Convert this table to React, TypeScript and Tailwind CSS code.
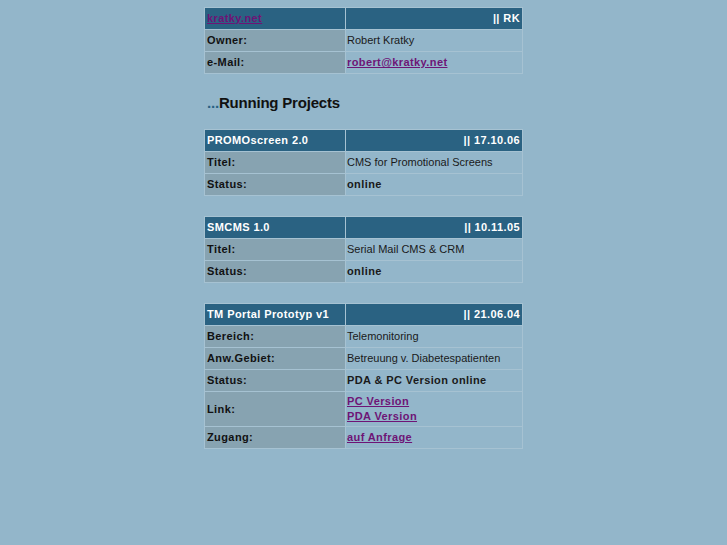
import React from 'react'

type Row = { label: string; value: React.ReactNode; tall?: boolean }

const linkCls = 'font-bold tracking-[0.4px] underline text-[#6e1476]'

const projects: { title: string; date: string; rows: Row[] }[] = [
    {
        title: 'PROMOscreen 2.0',
        date: '17.10.06',
        rows: [
            { label: 'Titel:', value: 'CMS for Promotional Screens' },
            { label: 'Status:', value: <b className="tracking-[0.4px]">online</b> },
        ],
    },
    {
        title: 'SMCMS 1.0',
        date: '10.11.05',
        rows: [
            { label: 'Titel:', value: 'Serial Mail CMS & CRM' },
            { label: 'Status:', value: <b className="tracking-[0.4px]">online</b> },
        ],
    },
    {
        title: 'TM Portal Prototyp v1',
        date: '21.06.04',
        rows: [
            { label: 'Bereich:', value: 'Telemonitoring' },
            { label: 'Anw.Gebiet:', value: 'Betreuung v. Diabetespatienten' },
            { label: 'Status:', value: <b className="tracking-[0.4px]">PDA &amp; PC Version online</b> },
            {
                label: 'Link:',
                tall: true,
                value: (
                    <>
                        <a href="#" className={linkCls}>PC Version</a>
                        <a href="#" className={linkCls}>PDA Version</a>
                    </>
                ),
            },
            {
                label: 'Zugang:',
                value: <a href="#" className={linkCls}>auf Anfrage </a>,
            },
        ],
    },
]

const InfoTable = ({ head, right, rows }: { head: React.ReactNode; right: string; rows: Row[] }) => (
    <div className="grid grid-cols-[140px_176px] gap-px p-px bg-[#a6c2d2]">
        <div className="h-[21px] flex items-center px-[2px] bg-[#2a6282] text-white font-bold tracking-[0.4px]">{head}</div>
        <div className="h-[21px] flex items-center justify-end px-[2px] bg-[#2a6282] text-white font-bold tracking-[0.4px]">|| {right}</div>
        {rows.map((r, i) => (
            <React.Fragment key={i}>
                <div className={`${r.tall ? 'h-[34px]' : 'h-[21px]'} flex items-center px-[2px] bg-[#87a3b1] font-bold tracking-[0.4px] text-[#111]`}>
                    {r.label}
                </div>
                <div className={`${r.tall ? 'h-[34px] flex-col items-start justify-center leading-[15px]' : 'h-[21px] items-center'} flex pl-[1px] pr-[2px] bg-[#93b6ca] text-[#1a1a1a]`}>
                    {r.value}
                </div>
            </React.Fragment>
        ))}
    </div>
)

export default function App() {
    return (
        <div className="min-h-screen bg-[#93b6ca] font-['Liberation_Sans',Arial,sans-serif] text-[11px]">
            <div className="w-[319px] mx-auto pt-[7px] flex flex-col">
                <InfoTable
                    head={<a href="#" className="underline text-[#6e1476]">kratky.net</a>}
                    right="RK"
                    rows={[
                        { label: 'Owner:', value: 'Robert Kratky' },
                        {
                            label: 'e-Mail:',
                            value: <a href="#" className={linkCls}>robert@kratky.net</a>,
                        },
                    ]}
                />

                <h2 className="mt-[20px] mb-[17px] h-[18px] leading-[18px] pl-[3px] text-[15px] font-bold tracking-[-0.2px] text-[#111]">
                    <span className="text-[#2a6282]">...</span>Running Projects
                </h2>

                <div className="flex flex-col gap-[20px]">
                    {projects.map((p) => (
                        <InfoTable key={p.title} head={p.title} right={p.date} rows={p.rows} />
                    ))}
                </div>
            </div>
        </div>
    )
}
